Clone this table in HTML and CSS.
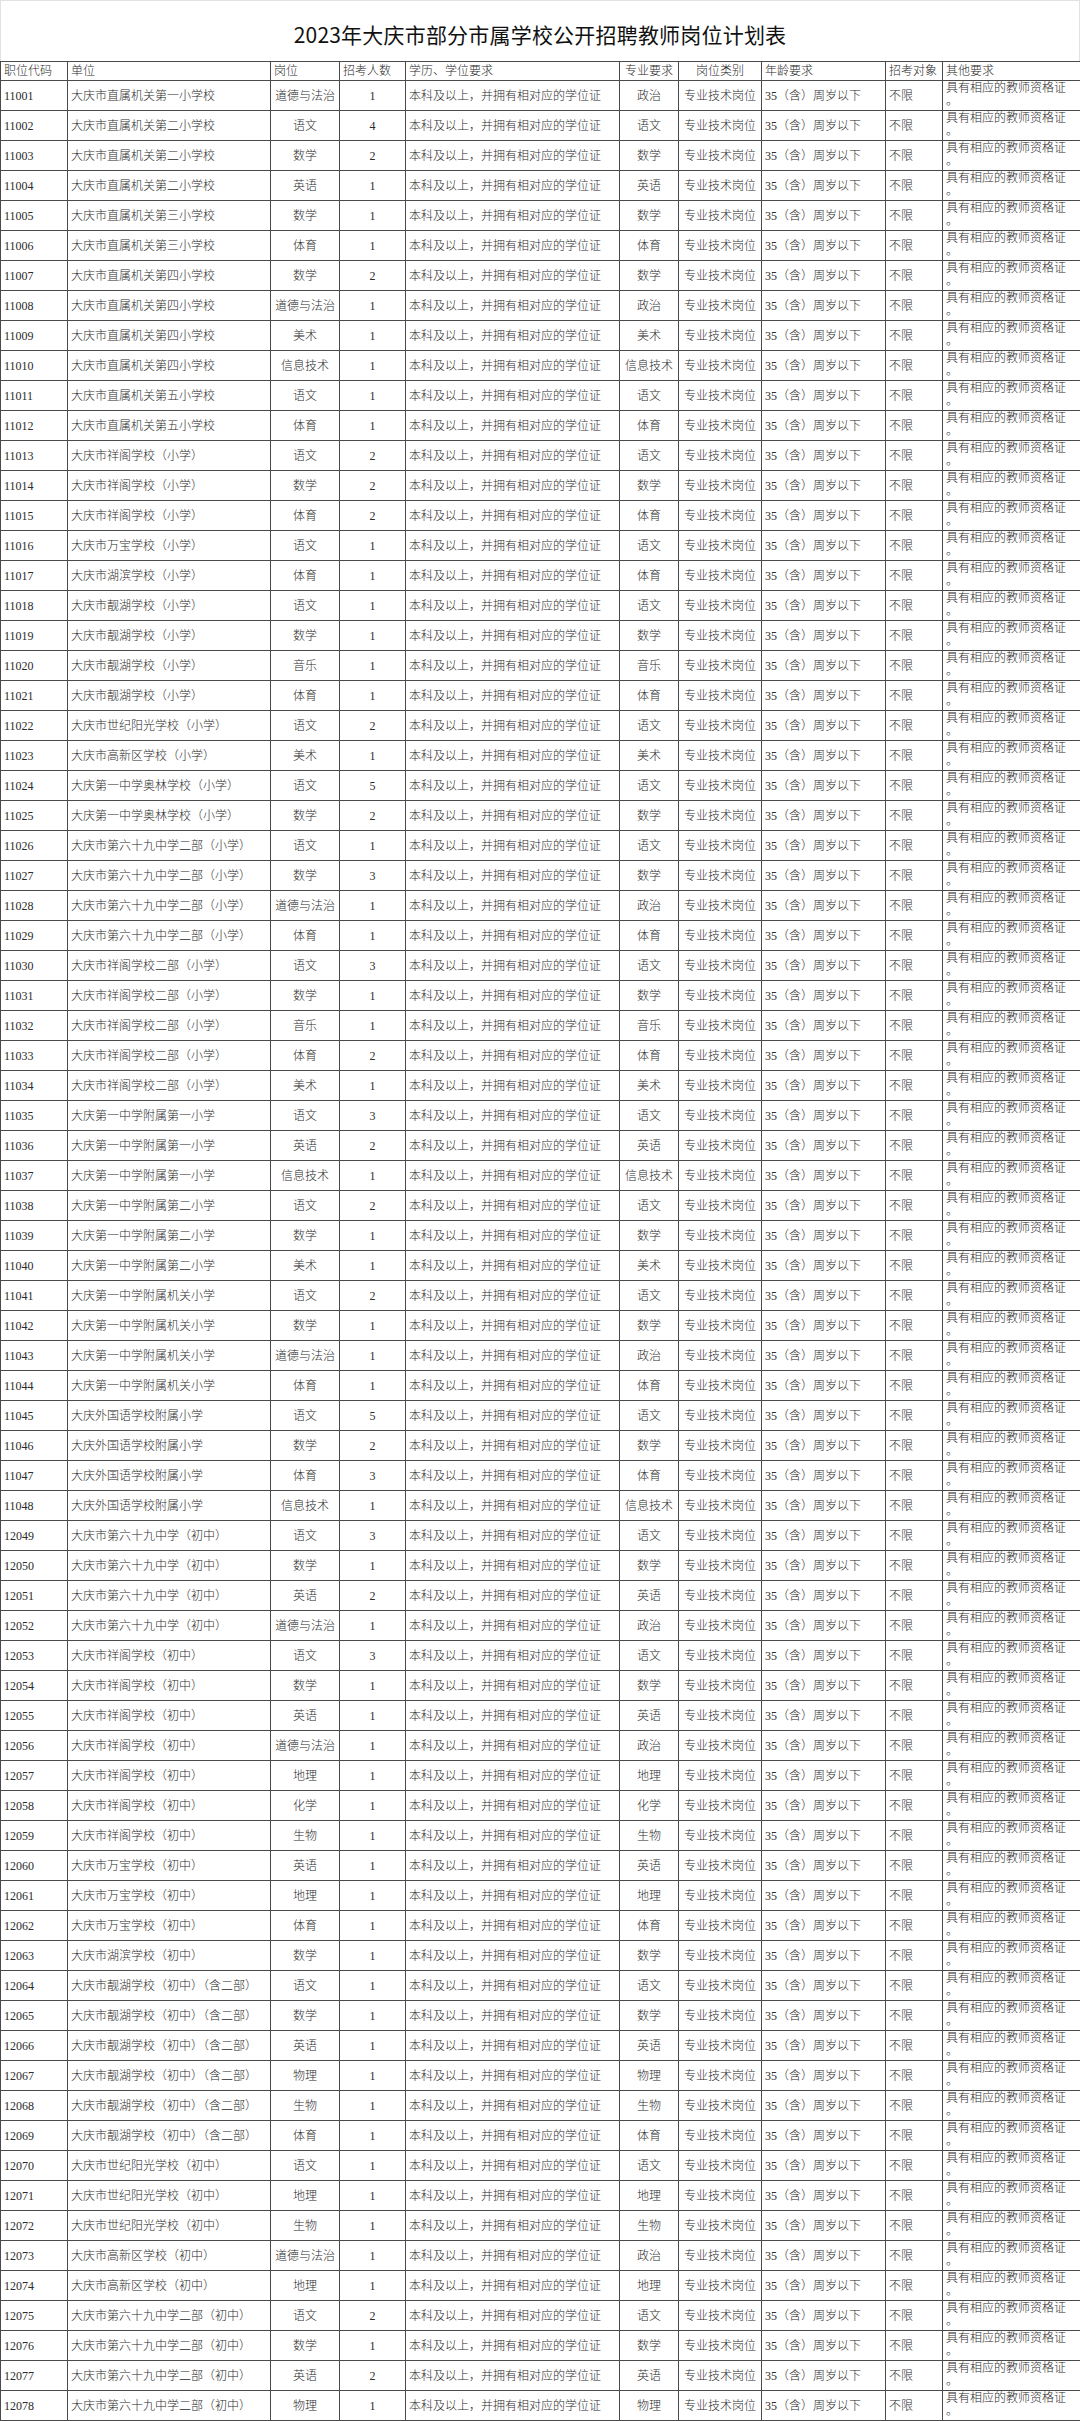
FILE: index.html
```html
<!DOCTYPE html>
<html lang="zh-CN">
<head>
<meta charset="utf-8">
<title>2023年大庆市部分市属学校公开招聘教师岗位计划表</title>
<link rel="stylesheet" href="styles.css">
</head>
<body>
<div class="sheet">
<h1 class="title">2023年大庆市部分市属学校公开招聘教师岗位计划表</h1>
<table class="plan">
<colgroup>
<col class="w1"><col class="w2"><col class="w3"><col class="w4"><col class="w5"><col class="w6"><col class="w7"><col class="w8"><col class="w9"><col class="w10">
</colgroup>
<thead>
<tr><th>职位代码</th><th>单位</th><th>岗位</th><th>招考人数</th><th>学历、学位要求</th><th>专业要求</th><th>岗位类别</th><th>年龄要求</th><th>招考对象</th><th>其他要求</th></tr>
</thead>
<tbody>
<tr><td>11001</td><td>大庆市直属机关第一小学校</td><td>道德与法治</td><td>1</td><td>本科及以上，并拥有相对应的学位证</td><td>政治</td><td>专业技术岗位</td><td>35（含）周岁以下</td><td>不限</td><td>具有相应的教师资格证<br>。</td></tr>
<tr><td>11002</td><td>大庆市直属机关第二小学校</td><td>语文</td><td>4</td><td>本科及以上，并拥有相对应的学位证</td><td>语文</td><td>专业技术岗位</td><td>35（含）周岁以下</td><td>不限</td><td>具有相应的教师资格证<br>。</td></tr>
<tr><td>11003</td><td>大庆市直属机关第二小学校</td><td>数学</td><td>2</td><td>本科及以上，并拥有相对应的学位证</td><td>数学</td><td>专业技术岗位</td><td>35（含）周岁以下</td><td>不限</td><td>具有相应的教师资格证<br>。</td></tr>
<tr><td>11004</td><td>大庆市直属机关第二小学校</td><td>英语</td><td>1</td><td>本科及以上，并拥有相对应的学位证</td><td>英语</td><td>专业技术岗位</td><td>35（含）周岁以下</td><td>不限</td><td>具有相应的教师资格证<br>。</td></tr>
<tr><td>11005</td><td>大庆市直属机关第三小学校</td><td>数学</td><td>1</td><td>本科及以上，并拥有相对应的学位证</td><td>数学</td><td>专业技术岗位</td><td>35（含）周岁以下</td><td>不限</td><td>具有相应的教师资格证<br>。</td></tr>
<tr><td>11006</td><td>大庆市直属机关第三小学校</td><td>体育</td><td>1</td><td>本科及以上，并拥有相对应的学位证</td><td>体育</td><td>专业技术岗位</td><td>35（含）周岁以下</td><td>不限</td><td>具有相应的教师资格证<br>。</td></tr>
<tr><td>11007</td><td>大庆市直属机关第四小学校</td><td>数学</td><td>2</td><td>本科及以上，并拥有相对应的学位证</td><td>数学</td><td>专业技术岗位</td><td>35（含）周岁以下</td><td>不限</td><td>具有相应的教师资格证<br>。</td></tr>
<tr><td>11008</td><td>大庆市直属机关第四小学校</td><td>道德与法治</td><td>1</td><td>本科及以上，并拥有相对应的学位证</td><td>政治</td><td>专业技术岗位</td><td>35（含）周岁以下</td><td>不限</td><td>具有相应的教师资格证<br>。</td></tr>
<tr><td>11009</td><td>大庆市直属机关第四小学校</td><td>美术</td><td>1</td><td>本科及以上，并拥有相对应的学位证</td><td>美术</td><td>专业技术岗位</td><td>35（含）周岁以下</td><td>不限</td><td>具有相应的教师资格证<br>。</td></tr>
<tr><td>11010</td><td>大庆市直属机关第四小学校</td><td>信息技术</td><td>1</td><td>本科及以上，并拥有相对应的学位证</td><td>信息技术</td><td>专业技术岗位</td><td>35（含）周岁以下</td><td>不限</td><td>具有相应的教师资格证<br>。</td></tr>
<tr><td>11011</td><td>大庆市直属机关第五小学校</td><td>语文</td><td>1</td><td>本科及以上，并拥有相对应的学位证</td><td>语文</td><td>专业技术岗位</td><td>35（含）周岁以下</td><td>不限</td><td>具有相应的教师资格证<br>。</td></tr>
<tr><td>11012</td><td>大庆市直属机关第五小学校</td><td>体育</td><td>1</td><td>本科及以上，并拥有相对应的学位证</td><td>体育</td><td>专业技术岗位</td><td>35（含）周岁以下</td><td>不限</td><td>具有相应的教师资格证<br>。</td></tr>
<tr><td>11013</td><td>大庆市祥阁学校（小学）</td><td>语文</td><td>2</td><td>本科及以上，并拥有相对应的学位证</td><td>语文</td><td>专业技术岗位</td><td>35（含）周岁以下</td><td>不限</td><td>具有相应的教师资格证<br>。</td></tr>
<tr><td>11014</td><td>大庆市祥阁学校（小学）</td><td>数学</td><td>2</td><td>本科及以上，并拥有相对应的学位证</td><td>数学</td><td>专业技术岗位</td><td>35（含）周岁以下</td><td>不限</td><td>具有相应的教师资格证<br>。</td></tr>
<tr><td>11015</td><td>大庆市祥阁学校（小学）</td><td>体育</td><td>2</td><td>本科及以上，并拥有相对应的学位证</td><td>体育</td><td>专业技术岗位</td><td>35（含）周岁以下</td><td>不限</td><td>具有相应的教师资格证<br>。</td></tr>
<tr><td>11016</td><td>大庆市万宝学校（小学）</td><td>语文</td><td>1</td><td>本科及以上，并拥有相对应的学位证</td><td>语文</td><td>专业技术岗位</td><td>35（含）周岁以下</td><td>不限</td><td>具有相应的教师资格证<br>。</td></tr>
<tr><td>11017</td><td>大庆市湖滨学校（小学）</td><td>体育</td><td>1</td><td>本科及以上，并拥有相对应的学位证</td><td>体育</td><td>专业技术岗位</td><td>35（含）周岁以下</td><td>不限</td><td>具有相应的教师资格证<br>。</td></tr>
<tr><td>11018</td><td>大庆市靓湖学校（小学）</td><td>语文</td><td>1</td><td>本科及以上，并拥有相对应的学位证</td><td>语文</td><td>专业技术岗位</td><td>35（含）周岁以下</td><td>不限</td><td>具有相应的教师资格证<br>。</td></tr>
<tr><td>11019</td><td>大庆市靓湖学校（小学）</td><td>数学</td><td>1</td><td>本科及以上，并拥有相对应的学位证</td><td>数学</td><td>专业技术岗位</td><td>35（含）周岁以下</td><td>不限</td><td>具有相应的教师资格证<br>。</td></tr>
<tr><td>11020</td><td>大庆市靓湖学校（小学）</td><td>音乐</td><td>1</td><td>本科及以上，并拥有相对应的学位证</td><td>音乐</td><td>专业技术岗位</td><td>35（含）周岁以下</td><td>不限</td><td>具有相应的教师资格证<br>。</td></tr>
<tr><td>11021</td><td>大庆市靓湖学校（小学）</td><td>体育</td><td>1</td><td>本科及以上，并拥有相对应的学位证</td><td>体育</td><td>专业技术岗位</td><td>35（含）周岁以下</td><td>不限</td><td>具有相应的教师资格证<br>。</td></tr>
<tr><td>11022</td><td>大庆市世纪阳光学校（小学）</td><td>语文</td><td>2</td><td>本科及以上，并拥有相对应的学位证</td><td>语文</td><td>专业技术岗位</td><td>35（含）周岁以下</td><td>不限</td><td>具有相应的教师资格证<br>。</td></tr>
<tr><td>11023</td><td>大庆市高新区学校（小学）</td><td>美术</td><td>1</td><td>本科及以上，并拥有相对应的学位证</td><td>美术</td><td>专业技术岗位</td><td>35（含）周岁以下</td><td>不限</td><td>具有相应的教师资格证<br>。</td></tr>
<tr><td>11024</td><td>大庆第一中学奥林学校（小学）</td><td>语文</td><td>5</td><td>本科及以上，并拥有相对应的学位证</td><td>语文</td><td>专业技术岗位</td><td>35（含）周岁以下</td><td>不限</td><td>具有相应的教师资格证<br>。</td></tr>
<tr><td>11025</td><td>大庆第一中学奥林学校（小学）</td><td>数学</td><td>2</td><td>本科及以上，并拥有相对应的学位证</td><td>数学</td><td>专业技术岗位</td><td>35（含）周岁以下</td><td>不限</td><td>具有相应的教师资格证<br>。</td></tr>
<tr><td>11026</td><td>大庆市第六十九中学二部（小学）</td><td>语文</td><td>1</td><td>本科及以上，并拥有相对应的学位证</td><td>语文</td><td>专业技术岗位</td><td>35（含）周岁以下</td><td>不限</td><td>具有相应的教师资格证<br>。</td></tr>
<tr><td>11027</td><td>大庆市第六十九中学二部（小学）</td><td>数学</td><td>3</td><td>本科及以上，并拥有相对应的学位证</td><td>数学</td><td>专业技术岗位</td><td>35（含）周岁以下</td><td>不限</td><td>具有相应的教师资格证<br>。</td></tr>
<tr><td>11028</td><td>大庆市第六十九中学二部（小学）</td><td>道德与法治</td><td>1</td><td>本科及以上，并拥有相对应的学位证</td><td>政治</td><td>专业技术岗位</td><td>35（含）周岁以下</td><td>不限</td><td>具有相应的教师资格证<br>。</td></tr>
<tr><td>11029</td><td>大庆市第六十九中学二部（小学）</td><td>体育</td><td>1</td><td>本科及以上，并拥有相对应的学位证</td><td>体育</td><td>专业技术岗位</td><td>35（含）周岁以下</td><td>不限</td><td>具有相应的教师资格证<br>。</td></tr>
<tr><td>11030</td><td>大庆市祥阁学校二部（小学）</td><td>语文</td><td>3</td><td>本科及以上，并拥有相对应的学位证</td><td>语文</td><td>专业技术岗位</td><td>35（含）周岁以下</td><td>不限</td><td>具有相应的教师资格证<br>。</td></tr>
<tr><td>11031</td><td>大庆市祥阁学校二部（小学）</td><td>数学</td><td>1</td><td>本科及以上，并拥有相对应的学位证</td><td>数学</td><td>专业技术岗位</td><td>35（含）周岁以下</td><td>不限</td><td>具有相应的教师资格证<br>。</td></tr>
<tr><td>11032</td><td>大庆市祥阁学校二部（小学）</td><td>音乐</td><td>1</td><td>本科及以上，并拥有相对应的学位证</td><td>音乐</td><td>专业技术岗位</td><td>35（含）周岁以下</td><td>不限</td><td>具有相应的教师资格证<br>。</td></tr>
<tr><td>11033</td><td>大庆市祥阁学校二部（小学）</td><td>体育</td><td>2</td><td>本科及以上，并拥有相对应的学位证</td><td>体育</td><td>专业技术岗位</td><td>35（含）周岁以下</td><td>不限</td><td>具有相应的教师资格证<br>。</td></tr>
<tr><td>11034</td><td>大庆市祥阁学校二部（小学）</td><td>美术</td><td>1</td><td>本科及以上，并拥有相对应的学位证</td><td>美术</td><td>专业技术岗位</td><td>35（含）周岁以下</td><td>不限</td><td>具有相应的教师资格证<br>。</td></tr>
<tr><td>11035</td><td>大庆第一中学附属第一小学</td><td>语文</td><td>3</td><td>本科及以上，并拥有相对应的学位证</td><td>语文</td><td>专业技术岗位</td><td>35（含）周岁以下</td><td>不限</td><td>具有相应的教师资格证<br>。</td></tr>
<tr><td>11036</td><td>大庆第一中学附属第一小学</td><td>英语</td><td>2</td><td>本科及以上，并拥有相对应的学位证</td><td>英语</td><td>专业技术岗位</td><td>35（含）周岁以下</td><td>不限</td><td>具有相应的教师资格证<br>。</td></tr>
<tr><td>11037</td><td>大庆第一中学附属第一小学</td><td>信息技术</td><td>1</td><td>本科及以上，并拥有相对应的学位证</td><td>信息技术</td><td>专业技术岗位</td><td>35（含）周岁以下</td><td>不限</td><td>具有相应的教师资格证<br>。</td></tr>
<tr><td>11038</td><td>大庆第一中学附属第二小学</td><td>语文</td><td>2</td><td>本科及以上，并拥有相对应的学位证</td><td>语文</td><td>专业技术岗位</td><td>35（含）周岁以下</td><td>不限</td><td>具有相应的教师资格证<br>。</td></tr>
<tr><td>11039</td><td>大庆第一中学附属第二小学</td><td>数学</td><td>1</td><td>本科及以上，并拥有相对应的学位证</td><td>数学</td><td>专业技术岗位</td><td>35（含）周岁以下</td><td>不限</td><td>具有相应的教师资格证<br>。</td></tr>
<tr><td>11040</td><td>大庆第一中学附属第二小学</td><td>美术</td><td>1</td><td>本科及以上，并拥有相对应的学位证</td><td>美术</td><td>专业技术岗位</td><td>35（含）周岁以下</td><td>不限</td><td>具有相应的教师资格证<br>。</td></tr>
<tr><td>11041</td><td>大庆第一中学附属机关小学</td><td>语文</td><td>2</td><td>本科及以上，并拥有相对应的学位证</td><td>语文</td><td>专业技术岗位</td><td>35（含）周岁以下</td><td>不限</td><td>具有相应的教师资格证<br>。</td></tr>
<tr><td>11042</td><td>大庆第一中学附属机关小学</td><td>数学</td><td>1</td><td>本科及以上，并拥有相对应的学位证</td><td>数学</td><td>专业技术岗位</td><td>35（含）周岁以下</td><td>不限</td><td>具有相应的教师资格证<br>。</td></tr>
<tr><td>11043</td><td>大庆第一中学附属机关小学</td><td>道德与法治</td><td>1</td><td>本科及以上，并拥有相对应的学位证</td><td>政治</td><td>专业技术岗位</td><td>35（含）周岁以下</td><td>不限</td><td>具有相应的教师资格证<br>。</td></tr>
<tr><td>11044</td><td>大庆第一中学附属机关小学</td><td>体育</td><td>1</td><td>本科及以上，并拥有相对应的学位证</td><td>体育</td><td>专业技术岗位</td><td>35（含）周岁以下</td><td>不限</td><td>具有相应的教师资格证<br>。</td></tr>
<tr><td>11045</td><td>大庆外国语学校附属小学</td><td>语文</td><td>5</td><td>本科及以上，并拥有相对应的学位证</td><td>语文</td><td>专业技术岗位</td><td>35（含）周岁以下</td><td>不限</td><td>具有相应的教师资格证<br>。</td></tr>
<tr><td>11046</td><td>大庆外国语学校附属小学</td><td>数学</td><td>2</td><td>本科及以上，并拥有相对应的学位证</td><td>数学</td><td>专业技术岗位</td><td>35（含）周岁以下</td><td>不限</td><td>具有相应的教师资格证<br>。</td></tr>
<tr><td>11047</td><td>大庆外国语学校附属小学</td><td>体育</td><td>3</td><td>本科及以上，并拥有相对应的学位证</td><td>体育</td><td>专业技术岗位</td><td>35（含）周岁以下</td><td>不限</td><td>具有相应的教师资格证<br>。</td></tr>
<tr><td>11048</td><td>大庆外国语学校附属小学</td><td>信息技术</td><td>1</td><td>本科及以上，并拥有相对应的学位证</td><td>信息技术</td><td>专业技术岗位</td><td>35（含）周岁以下</td><td>不限</td><td>具有相应的教师资格证<br>。</td></tr>
<tr><td>12049</td><td>大庆市第六十九中学（初中）</td><td>语文</td><td>3</td><td>本科及以上，并拥有相对应的学位证</td><td>语文</td><td>专业技术岗位</td><td>35（含）周岁以下</td><td>不限</td><td>具有相应的教师资格证<br>。</td></tr>
<tr><td>12050</td><td>大庆市第六十九中学（初中）</td><td>数学</td><td>1</td><td>本科及以上，并拥有相对应的学位证</td><td>数学</td><td>专业技术岗位</td><td>35（含）周岁以下</td><td>不限</td><td>具有相应的教师资格证<br>。</td></tr>
<tr><td>12051</td><td>大庆市第六十九中学（初中）</td><td>英语</td><td>2</td><td>本科及以上，并拥有相对应的学位证</td><td>英语</td><td>专业技术岗位</td><td>35（含）周岁以下</td><td>不限</td><td>具有相应的教师资格证<br>。</td></tr>
<tr><td>12052</td><td>大庆市第六十九中学（初中）</td><td>道德与法治</td><td>1</td><td>本科及以上，并拥有相对应的学位证</td><td>政治</td><td>专业技术岗位</td><td>35（含）周岁以下</td><td>不限</td><td>具有相应的教师资格证<br>。</td></tr>
<tr><td>12053</td><td>大庆市祥阁学校（初中）</td><td>语文</td><td>3</td><td>本科及以上，并拥有相对应的学位证</td><td>语文</td><td>专业技术岗位</td><td>35（含）周岁以下</td><td>不限</td><td>具有相应的教师资格证<br>。</td></tr>
<tr><td>12054</td><td>大庆市祥阁学校（初中）</td><td>数学</td><td>1</td><td>本科及以上，并拥有相对应的学位证</td><td>数学</td><td>专业技术岗位</td><td>35（含）周岁以下</td><td>不限</td><td>具有相应的教师资格证<br>。</td></tr>
<tr><td>12055</td><td>大庆市祥阁学校（初中）</td><td>英语</td><td>1</td><td>本科及以上，并拥有相对应的学位证</td><td>英语</td><td>专业技术岗位</td><td>35（含）周岁以下</td><td>不限</td><td>具有相应的教师资格证<br>。</td></tr>
<tr><td>12056</td><td>大庆市祥阁学校（初中）</td><td>道德与法治</td><td>1</td><td>本科及以上，并拥有相对应的学位证</td><td>政治</td><td>专业技术岗位</td><td>35（含）周岁以下</td><td>不限</td><td>具有相应的教师资格证<br>。</td></tr>
<tr><td>12057</td><td>大庆市祥阁学校（初中）</td><td>地理</td><td>1</td><td>本科及以上，并拥有相对应的学位证</td><td>地理</td><td>专业技术岗位</td><td>35（含）周岁以下</td><td>不限</td><td>具有相应的教师资格证<br>。</td></tr>
<tr><td>12058</td><td>大庆市祥阁学校（初中）</td><td>化学</td><td>1</td><td>本科及以上，并拥有相对应的学位证</td><td>化学</td><td>专业技术岗位</td><td>35（含）周岁以下</td><td>不限</td><td>具有相应的教师资格证<br>。</td></tr>
<tr><td>12059</td><td>大庆市祥阁学校（初中）</td><td>生物</td><td>1</td><td>本科及以上，并拥有相对应的学位证</td><td>生物</td><td>专业技术岗位</td><td>35（含）周岁以下</td><td>不限</td><td>具有相应的教师资格证<br>。</td></tr>
<tr><td>12060</td><td>大庆市万宝学校（初中）</td><td>英语</td><td>1</td><td>本科及以上，并拥有相对应的学位证</td><td>英语</td><td>专业技术岗位</td><td>35（含）周岁以下</td><td>不限</td><td>具有相应的教师资格证<br>。</td></tr>
<tr><td>12061</td><td>大庆市万宝学校（初中）</td><td>地理</td><td>1</td><td>本科及以上，并拥有相对应的学位证</td><td>地理</td><td>专业技术岗位</td><td>35（含）周岁以下</td><td>不限</td><td>具有相应的教师资格证<br>。</td></tr>
<tr><td>12062</td><td>大庆市万宝学校（初中）</td><td>体育</td><td>1</td><td>本科及以上，并拥有相对应的学位证</td><td>体育</td><td>专业技术岗位</td><td>35（含）周岁以下</td><td>不限</td><td>具有相应的教师资格证<br>。</td></tr>
<tr><td>12063</td><td>大庆市湖滨学校（初中）</td><td>数学</td><td>1</td><td>本科及以上，并拥有相对应的学位证</td><td>数学</td><td>专业技术岗位</td><td>35（含）周岁以下</td><td>不限</td><td>具有相应的教师资格证<br>。</td></tr>
<tr><td>12064</td><td>大庆市靓湖学校（初中）（含二部）</td><td>语文</td><td>1</td><td>本科及以上，并拥有相对应的学位证</td><td>语文</td><td>专业技术岗位</td><td>35（含）周岁以下</td><td>不限</td><td>具有相应的教师资格证<br>。</td></tr>
<tr><td>12065</td><td>大庆市靓湖学校（初中）（含二部）</td><td>数学</td><td>1</td><td>本科及以上，并拥有相对应的学位证</td><td>数学</td><td>专业技术岗位</td><td>35（含）周岁以下</td><td>不限</td><td>具有相应的教师资格证<br>。</td></tr>
<tr><td>12066</td><td>大庆市靓湖学校（初中）（含二部）</td><td>英语</td><td>1</td><td>本科及以上，并拥有相对应的学位证</td><td>英语</td><td>专业技术岗位</td><td>35（含）周岁以下</td><td>不限</td><td>具有相应的教师资格证<br>。</td></tr>
<tr><td>12067</td><td>大庆市靓湖学校（初中）（含二部）</td><td>物理</td><td>1</td><td>本科及以上，并拥有相对应的学位证</td><td>物理</td><td>专业技术岗位</td><td>35（含）周岁以下</td><td>不限</td><td>具有相应的教师资格证<br>。</td></tr>
<tr><td>12068</td><td>大庆市靓湖学校（初中）（含二部）</td><td>生物</td><td>1</td><td>本科及以上，并拥有相对应的学位证</td><td>生物</td><td>专业技术岗位</td><td>35（含）周岁以下</td><td>不限</td><td>具有相应的教师资格证<br>。</td></tr>
<tr><td>12069</td><td>大庆市靓湖学校（初中）（含二部）</td><td>体育</td><td>1</td><td>本科及以上，并拥有相对应的学位证</td><td>体育</td><td>专业技术岗位</td><td>35（含）周岁以下</td><td>不限</td><td>具有相应的教师资格证<br>。</td></tr>
<tr><td>12070</td><td>大庆市世纪阳光学校（初中）</td><td>语文</td><td>1</td><td>本科及以上，并拥有相对应的学位证</td><td>语文</td><td>专业技术岗位</td><td>35（含）周岁以下</td><td>不限</td><td>具有相应的教师资格证<br>。</td></tr>
<tr><td>12071</td><td>大庆市世纪阳光学校（初中）</td><td>地理</td><td>1</td><td>本科及以上，并拥有相对应的学位证</td><td>地理</td><td>专业技术岗位</td><td>35（含）周岁以下</td><td>不限</td><td>具有相应的教师资格证<br>。</td></tr>
<tr><td>12072</td><td>大庆市世纪阳光学校（初中）</td><td>生物</td><td>1</td><td>本科及以上，并拥有相对应的学位证</td><td>生物</td><td>专业技术岗位</td><td>35（含）周岁以下</td><td>不限</td><td>具有相应的教师资格证<br>。</td></tr>
<tr><td>12073</td><td>大庆市高新区学校（初中）</td><td>道德与法治</td><td>1</td><td>本科及以上，并拥有相对应的学位证</td><td>政治</td><td>专业技术岗位</td><td>35（含）周岁以下</td><td>不限</td><td>具有相应的教师资格证<br>。</td></tr>
<tr><td>12074</td><td>大庆市高新区学校（初中）</td><td>地理</td><td>1</td><td>本科及以上，并拥有相对应的学位证</td><td>地理</td><td>专业技术岗位</td><td>35（含）周岁以下</td><td>不限</td><td>具有相应的教师资格证<br>。</td></tr>
<tr><td>12075</td><td>大庆市第六十九中学二部（初中）</td><td>语文</td><td>2</td><td>本科及以上，并拥有相对应的学位证</td><td>语文</td><td>专业技术岗位</td><td>35（含）周岁以下</td><td>不限</td><td>具有相应的教师资格证<br>。</td></tr>
<tr><td>12076</td><td>大庆市第六十九中学二部（初中）</td><td>数学</td><td>1</td><td>本科及以上，并拥有相对应的学位证</td><td>数学</td><td>专业技术岗位</td><td>35（含）周岁以下</td><td>不限</td><td>具有相应的教师资格证<br>。</td></tr>
<tr><td>12077</td><td>大庆市第六十九中学二部（初中）</td><td>英语</td><td>2</td><td>本科及以上，并拥有相对应的学位证</td><td>英语</td><td>专业技术岗位</td><td>35（含）周岁以下</td><td>不限</td><td>具有相应的教师资格证<br>。</td></tr>
<tr><td>12078</td><td>大庆市第六十九中学二部（初中）</td><td>物理</td><td>1</td><td>本科及以上，并拥有相对应的学位证</td><td>物理</td><td>专业技术岗位</td><td>35（含）周岁以下</td><td>不限</td><td>具有相应的教师资格证<br>。</td></tr>
</tbody>
</table>
</div>
</body>
</html>
```

FILE: styles.css
```css
html, body {
  margin: 0;
  padding: 0;
  background: #ffffff;
}

.sheet {
  width: 1080px;
}

.title {
  box-sizing: border-box;
  height: 61px;
  margin: 0;
  padding-top: 6px;
  display: flex;
  align-items: center;
  justify-content: center;
  border-top: 1px solid #e2e2e2;
  border-left: 1px solid #e2e2e2;
  border-right: 1px solid #e2e2e2;
  font-family: "Noto Sans CJK SC", "Noto Sans", sans-serif;
  font-size: 21px;
  font-weight: 400;
  color: #111111;
  letter-spacing: 0.2px;
}

.plan {
  width: 1080px;
  table-layout: fixed;
  border-collapse: collapse;
  font-family: "Liberation Serif", "Noto Sans CJK SC", serif;
  font-size: 12px;
  font-weight: 300;
  color: #2b2b2b;
}

.w1 { width: 67px; }
.w2 { width: 203px; }
.w3 { width: 69px; }
.w4 { width: 66px; }
.w5 { width: 214px; }
.w6 { width: 59px; }
.w7 { width: 83px; }
.w8 { width: 124px; }
.w9 { width: 57px; }
.w10 { width: 138px; }

.plan th,
.plan td {
  border: 1px solid #4a4a4a;
  padding: 0 0 0 3px;
  white-space: nowrap;
  overflow: hidden;
  text-align: left;
  vertical-align: middle;
}

.plan thead tr {
  height: 19px;
}

.plan th {
  font-weight: 300;
  line-height: 14px;
}

.plan tbody tr {
  height: 30px;
}

.plan td {
  line-height: 14px;
}

.plan th:nth-child(6),
.plan th:nth-child(7) {
  text-align: center;
  padding-left: 0;
}

.plan td:nth-child(3),
.plan td:nth-child(4),
.plan td:nth-child(6),
.plan td:nth-child(7) {
  text-align: center;
  padding-left: 0;
}

.plan td:nth-child(10) {
  vertical-align: top;
  padding-top: 1px;
  line-height: 13px;
}
```
